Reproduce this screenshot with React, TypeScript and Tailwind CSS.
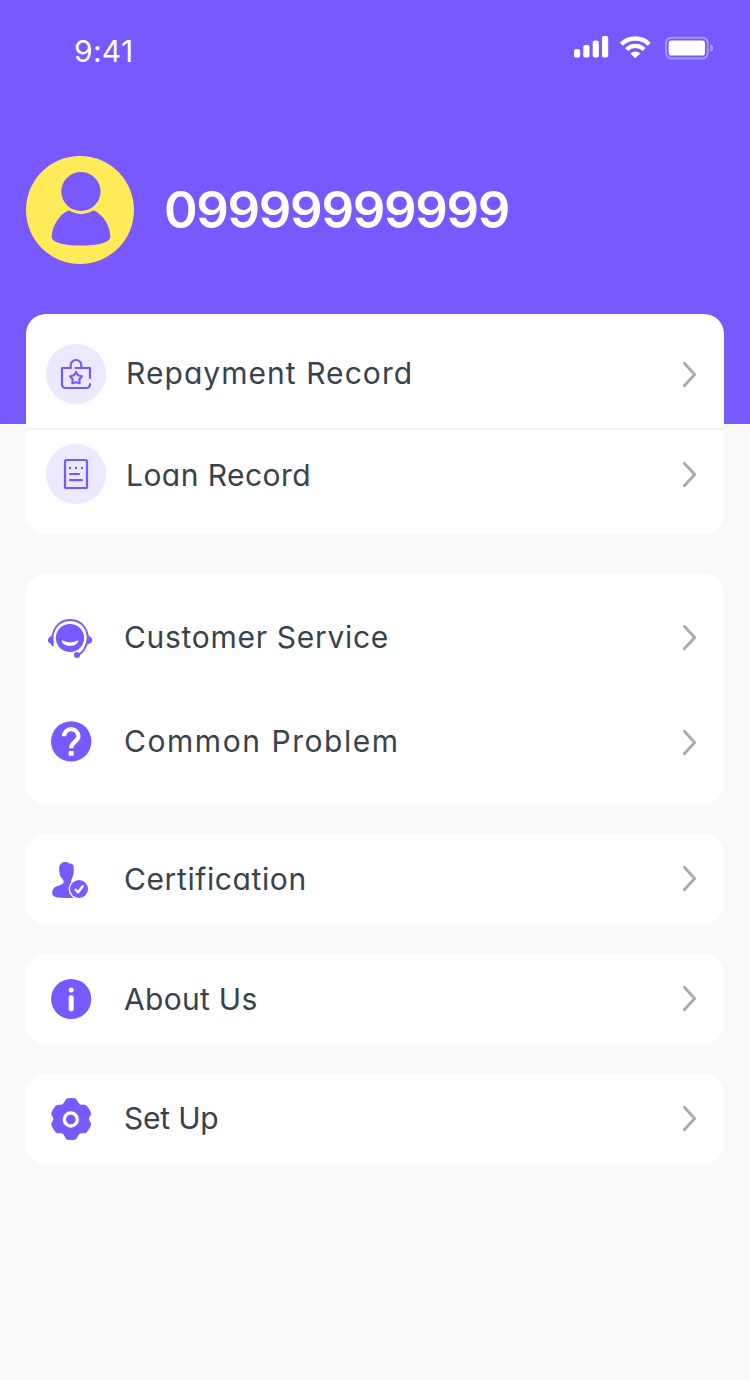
import type { ReactNode } from 'react';
import clsx from 'clsx';

interface MenuRowProps {
  icon: ReactNode;
  label: string;
  className?: string;
  labelClassName?: string;
  chevronClassName?: string;
}

function Chevron({ className }: { className?: string }) {
  return (
    <svg width="20" height="30" viewBox="0 0 20 30" fill="none" className={clsx('ml-auto shrink-0', className)}>
      <path d="M4.3 4.2 14.7 15.5 4.3 26.8" stroke="#aaaaaa" strokeWidth="2.8" strokeLinecap="round" strokeLinejoin="round" />
    </svg>
  );
}

function StatusIcons() {
  return (
    <svg width="140" height="24" viewBox="0 0 140 24" fill="none">
      {/* Signal */}
      <g fill="#fff">
        <rect x="0" y="13" width="6.2" height="8.6" rx="2" />
        <rect x="9.3" y="9" width="6.2" height="12.6" rx="2" />
        <rect x="18.7" y="4.6" width="6.2" height="17" rx="2" />
        <rect x="28" y="0" width="6.2" height="21.6" rx="2" />
      </g>
      {/* Wifi */}
      <path d="M47.4 8.3a19.7 19.7 0 0 1 27.8 0" stroke="#fff" strokeWidth="4.4" />
      <path d="M52.6 13.4a12.5 12.5 0 0 1 17.6 0" stroke="#fff" strokeWidth="4.2" />
      <path d="M56.3 17.4a7.2 7.2 0 0 1 10 0l-4.4 4.3q-.6.5-1.2 0z" fill="#fff" />
      {/* Battery */}
      <rect x="92" y="1.7" width="41.8" height="20.8" rx="5.5" stroke="#fff" strokeOpacity=".36" strokeWidth="2" />
      <rect x="94.7" y="4.6" width="36.3" height="15" rx="2.8" fill="#fff" />
      <path d="M136.4 8.2c3.9 1.5 3.9 6.3 0 7.8z" fill="#fff" fillOpacity=".4" />
    </svg>
  );
}

function Avatar() {
  return (
    <svg width="108" height="108" viewBox="0 0 108 108">
      <circle cx="54" cy="54" r="54" fill="#ffeb57" />
      <g fill="#7859ff">
        <circle cx="54.9" cy="35.5" r="19.6" />
        <path d="M43.2 54.3Q55 61.8 67.5 54.3C78 59 84.3 71 84.3 80.7C84.3 86.5 72 89.6 55 89.6C38 89.6 25.7 86.5 25.7 80.7C25.7 71 33 58 43.2 54.3Z" />
      </g>
    </svg>
  );
}

function RepaymentIcon() {
  return (
    <svg width="60" height="60" viewBox="0 0 60 60" fill="none" stroke="#7859ff" strokeWidth="2.2" strokeLinecap="round" strokeLinejoin="round">
      <path d="M44 34V24H29.3M24.7 24H16v16.5a3.5 3.5 0 0 0 3.5 3.5h21a3.5 3.5 0 0 0 3.5-3.5V40" />
      <path d="M24.7 24v-2.7a5.3 5.3 0 0 1 10.6 0v1.2" />
      <path d="m30 28 2.1 3.3 3.8 1-2.5 3 .2 4-3.6-1.1-3.6 1.1.2-4-2.500-3 3.800-1z" />
    </svg>
  );
}

function LoanIcon() {
  return (
    <svg width="60" height="60" viewBox="0 0 60 60" fill="none" stroke="#7859ff" strokeWidth="2.2">
      <rect x="19" y="16" width="22" height="28" rx="1.5" />
      <path d="M23 23.8h2M29 23.8h2M35 23.8h2" />
      <path d="M24 30h9M24 36.2h12" strokeLinecap="round" />
    </svg>
  );
}

function ServiceIcon() {
  return (
    <svg width="48" height="48" viewBox="0 0 48 48" fill="none">
      <circle cx="24" cy="24" r="14.1" fill="#7859ff" />
      <path d="M15.8 26.3q8.2 4.2 16.5 0c.3 3.4-3.7 5.6-8.3 5.6s-8.5-2.2-8.2-5.6z" fill="#fff" />
      <path d="M7 29.5C4.5 17 12 6 24.2 6S44 17 41 28.5C39.5 34.5 36.5 39 32 40.8" stroke="#7859ff" strokeWidth="1.9" />
      <path d="M6.8 20.2C6 24 6.3 28 8 31.6l-1.500 1-2-3C1.200 28.500 1.200 24.200 4 22.900zM41.400 20.200c1.300 3.400 1 7.100-.2 10.300l3-1.200c2.600-1.400 2.600-5.500-.1-6.600z" fill="#7859ff" />
      <circle cx="31" cy="41" r="3" fill="#7859ff" />
    </svg>
  );
}

function HelpIcon() {
  return (
    <svg width="48" height="48" viewBox="0 0 48 48" fill="none">
      <circle cx="25.2" cy="23.4" r="20.2" fill="#7859ff" />
      <path d="M18 18.3a7.2 7.2 0 0 1 14.400 0c0 5.200-7.200 5.700-7.200 11.900" stroke="#fff" strokeWidth="4.200" />
      <rect x="22.700" y="33" width="4.900" height="4.700" fill="#fff" />
    </svg>
  );
}

function CertificationIcon() {
  return (
    <svg width="48" height="48" viewBox="0 0 48 48" fill="none">
      <path
        d="M20 7c1.6 0 2.5.7 3.3 1.6 3.500 0 4.700 1.800 4.400 5.400.2 4-.2 7-2 9.700-.8 2.800-.8 5 1.800 6.300v12.700C18 43.200 10.500 43 7.500 41c-1.900-1.400-1.800-4.800 0-7.200C10 30.500 14.500 30.800 17 28.600c1-1.300.8-3-.3-4.300C14.200 22 12.800 18 13.200 12.700 13.300 9 16.200 7 20 7z"
        fill="#7859ff"
      />
      <circle cx="33" cy="34" r="10.3" fill="#fff" />
      <circle cx="33" cy="34" r="9" fill="#7859ff" />
      <path d="m29.6 34.7 2.5 2.6 4.6-6" stroke="#fff" strokeWidth="2.4" strokeLinecap="round" strokeLinejoin="round" />
    </svg>
  );
}

function AboutIcon() {
  return (
    <svg width="48" height="48" viewBox="0 0 48 48">
      <circle cx="25.2" cy="24" r="20.1" fill="#7859ff" />
      <circle cx="25.2" cy="15.1" r="2.5" fill="#fff" />
      <rect x="22.7" y="20.3" width="5" height="16" rx="2" fill="#fff" />
    </svg>
  );
}

function SettingsIcon() {
  return (
    <svg width="48" height="48" viewBox="0 0 48 48">
      <path
        d="M21.5 3.3Q25.2 2.7 28.9 3.3C31.8 4.2 31.5 8.2 34.3 9.4C36.5 10.3 38.5 9 40.5 10.6Q43.7 14 45 18C45.6 20.7 43 21.6 43 24S45.6 27.3 45 30Q43.7 34 40.5 37.4C38.5 39 36.5 37.7 34.3 38.6C31.5 39.8 31.8 43.8 28.9 44.7Q25.2 45.3 21.5 44.7C18.6 43.8 18.9 39.8 16.1 38.6C13.9 37.7 11.9 39 9.9 37.4Q6.7 34 5.4 30C4.8 27.3 7.4 26.4 7.4 24S4.8 20.7 5.4 18Q6.7 14 9.9 10.6C11.9 9 13.9 10.3 16.1 9.4C18.9 8.2 18.6 4.2 21.5 3.3Z"
        fill="#7859ff"
      />
      <circle cx="24.8" cy="24.5" r="6.5" fill="none" stroke="#fff" strokeWidth="3.4" />
    </svg>
  );
}

function MenuRow({ icon, label, className, labelClassName, chevronClassName }: MenuRowProps) {
  return (
    <div className={clsx('flex items-center pl-5 pr-6', className)}>
      <div className="shrink-0">{icon}</div>
      <span
        className={clsx(
          "whitespace-nowrap text-[30px] leading-10 text-[#39424c] [font-feature-settings:'cv11']",
          labelClassName
        )}
      >
        {label}
      </span>
      <Chevron className={chevronClassName} />
    </div>
  );
}

function Card({ children }: { children: ReactNode }) {
  return <section className="rounded-[20px] bg-white">{children}</section>;
}

export default function App() {
  return (
    <div className="min-h-[1380px] w-[750px] bg-[#f9f9f9] font-['Inter','Liberation_Sans',sans-serif]">
      <header className="h-[424px] bg-[#7859ff] text-white">
        <div className="flex justify-between pl-[74px] pr-9 pt-9">
          <span className="text-[30px] leading-[30px] tracking-[0.3px]">9:41</span>
          <StatusIcons />
        </div>
        <div className="flex items-center gap-[30px] pl-[26px] pt-[90px]">
          <Avatar />
          <span className="pb-0.5 text-[51px] leading-none font-semibold tracking-[-1.35px]">09999999999</span>
        </div>
      </header>

      <main className="-mt-[110px] flex flex-col gap-[30px] px-[26px]">
        <div className="mb-2.5">
          <Card>
            <MenuRow
              icon={<div className="rounded-full bg-[#ece8ff]"><RepaymentIcon /></div>}
              label="Repayment Record"
              className="border-b-2 border-[#f3f3f3] pb-6 pt-[30px]"
              labelClassName="ml-5 pb-0.5 tracking-[1.05px]"
            />
            <MenuRow
              icon={<div className="rounded-full bg-[#ece8ff]"><LoanIcon /></div>}
              label="Loan Record"
              className="pb-[30px] pt-3.5"
              labelClassName="ml-5 pt-px tracking-[0.45px]"
            />
          </Card>
        </div>
        <Card>
          <MenuRow
            icon={<ServiceIcon />}
            label="Customer Service"
            className="h-32"
            labelClassName="ml-[30px] pb-0.5 tracking-[0.7px]"
            chevronClassName="mb-0.5"
          />
          <MenuRow
            icon={<HelpIcon />}
            label="Common Problem"
            className="h-[102px] pb-[22px]"
            labelClassName="ml-[30px] pb-0.5 tracking-[1.55px]"
          />
        </Card>
        <Card>
          <MenuRow
            icon={<CertificationIcon />}
            label="Certification"
            className="h-[90px]"
            labelClassName="ml-[30px] tracking-[0.6px]"
            chevronClassName="mb-0.5"
          />
        </Card>
        <Card>
          <MenuRow
            icon={<AboutIcon />}
            label="About Us"
            className="h-[90px]"
            labelClassName="ml-[30px] tracking-[0.3px]"
            chevronClassName="mb-0.5"
          />
        </Card>
        <Card>
          <MenuRow
            icon={<SettingsIcon />}
            label="Set Up"
            className="h-[90px]"
            labelClassName="ml-[30px] pb-0.5 tracking-[-0.2px]"
            chevronClassName="mb-0.5"
          />
        </Card>
      </main>
    </div>
  );
}
